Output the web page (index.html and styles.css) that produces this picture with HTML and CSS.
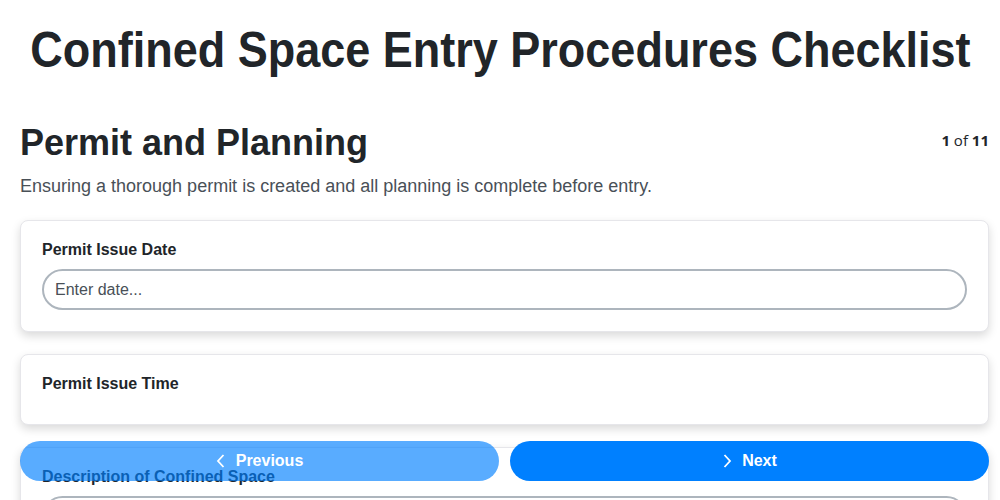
FILE: index.html
```html
<!DOCTYPE html>
<html lang="en">
<head>
  <meta charset="UTF-8" />
  <meta name="viewport" content="width=device-width, initial-scale=1.0"/>
  <title>Confined Space Entry Procedures Checklist</title>
  <link rel="stylesheet" href="styles.css">
</head>
<body>
  <h1 class="page-title"><span>Confined Space Entry Procedures Checklist</span></h1>

  <div class="section">
    <div class="section-head">
      <h2>Permit and Planning</h2>
      <div class="step-count"><b>1</b> of <b>11</b></div>
    </div>
    <p class="section-desc">Ensuring a thorough permit is created and all planning is complete before entry.</p>

    <div class="card">
      <label class="field-label">Permit Issue Date</label>
      <input class="field-input" type="text" placeholder="Enter date...">
    </div>

    <div class="card">
      <label class="field-label">Permit Issue Time</label>
    </div>

    <div class="card">
      <label class="field-label">Description of Confined Space</label>
      <input class="field-input" type="text">
    </div>
  </div>

  <div class="nav-bar">
    <button class="nav-btn prev" disabled>
      <svg width="10" height="16" viewBox="0 0 10 16"><path d="M7.5 2 L2 8 L7.5 14" fill="none" stroke="white" stroke-width="1.8"/></svg>
      Previous
    </button>
    <button class="nav-btn next">
      <svg width="10" height="16" viewBox="0 0 10 16"><path d="M2.5 2 L8 8 L2.5 14" fill="none" stroke="white" stroke-width="1.8"/></svg>
      Next
    </button>
  </div>
</body>
</html>
```

FILE: styles.css
```css
body {
  margin: 0;
  padding: 0 11px 0 20px;
  background: white;
  color: #212529;
  font-family: "Liberation Sans", Arial, sans-serif;
  overflow-x: hidden;
}

.page-title {
  display: flex;
  justify-content: center;
  font-size: 50px;
  font-weight: bold;
  margin: 22px -11px 0 -20px;
  line-height: 56px;
  white-space: nowrap;
}

/* the heading is drawn condensed */
.page-title span {
  display: inline-block;
  transform: scaleX(0.9);
}

.section-head {
  display: flex;
  justify-content: space-between;
  align-items: flex-start;
  margin-top: 44px;
}

.section-head h2 {
  font-size: 36px;
  margin: 0;
  line-height: 42px;
}

.step-count {
  font-family: "Open Sans", sans-serif;
  font-size: 15px;
  margin-top: 8px;
}

.section-desc {
  font-size: 18px;
  color: #495057;
  margin: 12px 0 23px;
}

.card {
  background: white;
  border: 1px solid #e6e6ea;
  border-radius: 8px;
  box-shadow: 0 4px 10px rgba(0, 0, 0, 0.15);
  padding: 20px 21px 21px;
  margin-bottom: 22px;
}

.field-label {
  display: block;
  font-weight: bold;
  font-size: 16px;
  margin-bottom: 10px;
}

.field-input {
  display: block;
  box-sizing: border-box;
  width: 100%;
  height: 41px;
  border: 2px solid #adb5bd;
  border-radius: 21px;
  padding: 0 11px;
  font-family: "Liberation Sans", Arial, sans-serif;
  font-size: 16px;
  color: #495057;
  outline: none;
}

.field-input::placeholder {
  color: #495057;
}

.nav-bar {
  position: fixed;
  left: 20px;
  right: 11px;
  bottom: 19px;
  display: flex;
  gap: 11px;
}

.nav-btn {
  flex: 1;
  height: 40px;
  border: none;
  border-radius: 20px;
  background: #0080ff;
  color: white;
  font-family: "Liberation Sans", Arial, sans-serif;
  font-size: 16px;
  font-weight: bold;
  display: flex;
  align-items: center;
  justify-content: center;
  gap: 10px;
}

.nav-btn.prev {
  opacity: 0.65;
}
```
